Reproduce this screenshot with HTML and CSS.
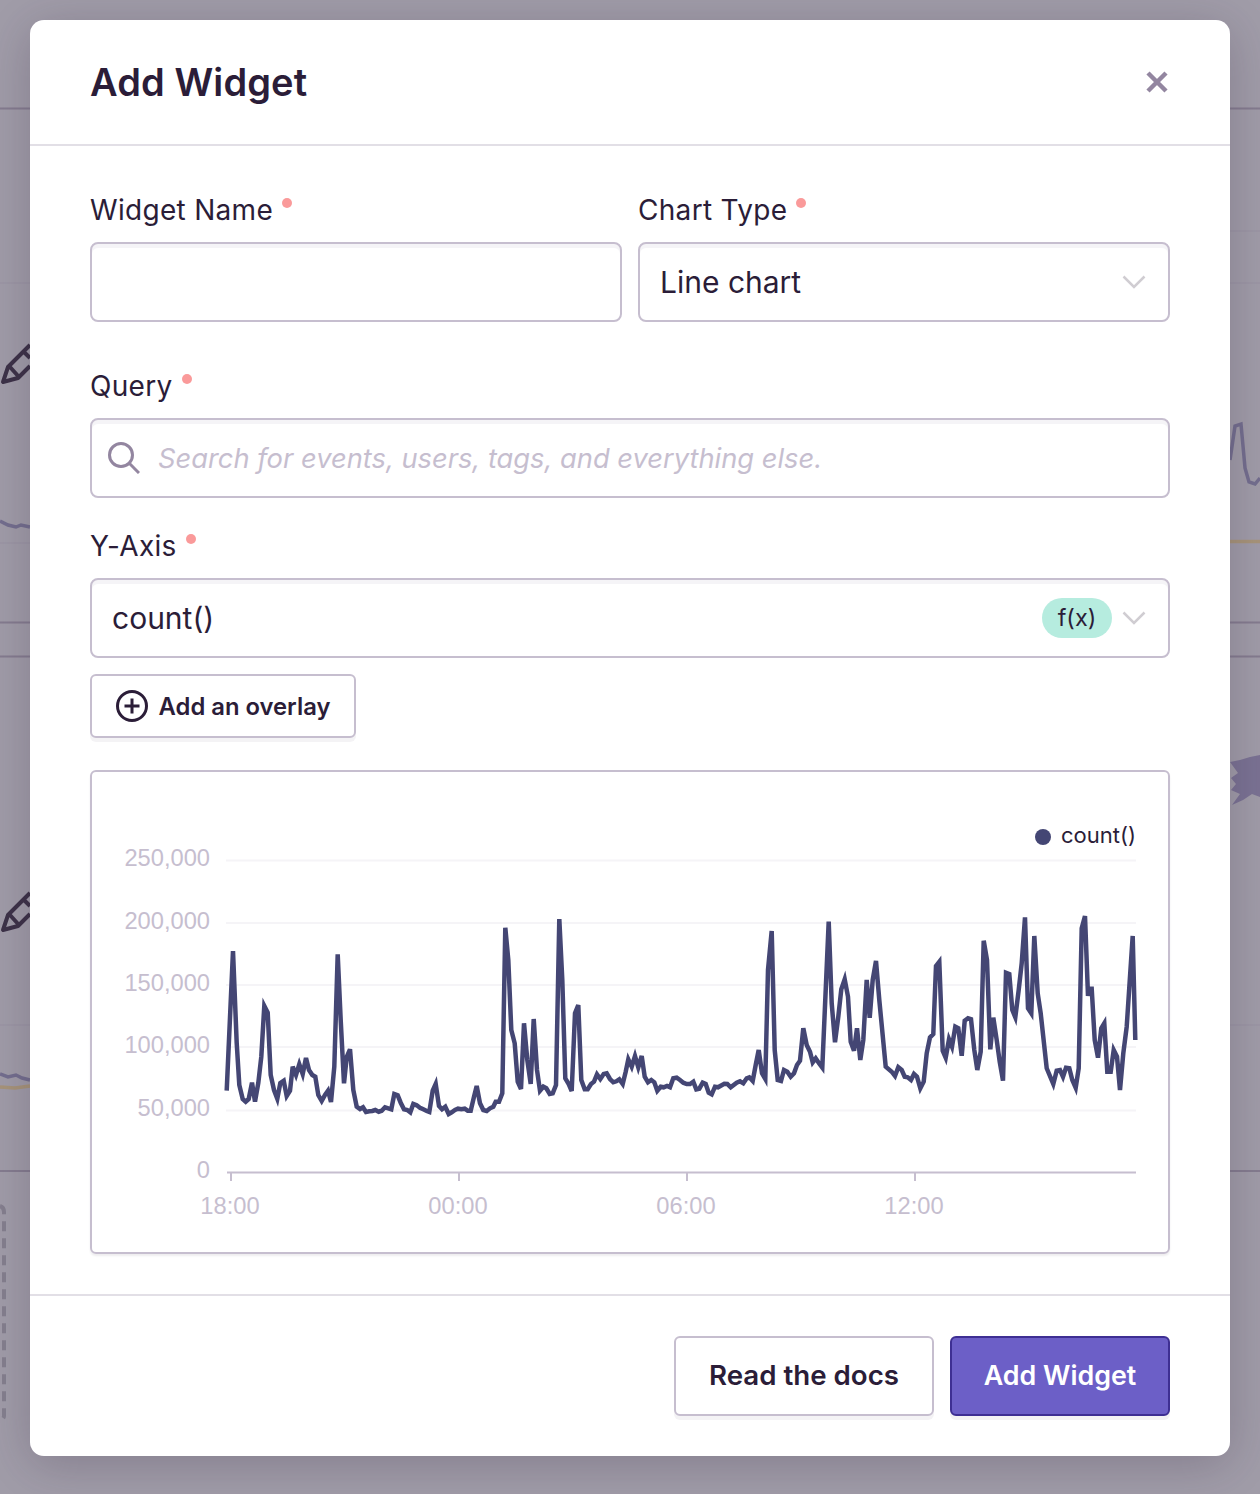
FILE: index.html
```html
<!DOCTYPE html>
<html lang="en">
<head>
    <meta charset="UTF-8">
    <meta name="viewport" content="width=device-width, initial-scale=1.0">
    <title>Add Widget</title>
    <link rel="stylesheet" href="styles.css">
</head>
<body>
    <!-- dashboard behind the modal -->
    <svg class="backdrop" viewBox="0 0 1260 1494" aria-hidden="true">
        <g class="bg-rule">
            <path d="M0 108.500H30M1230 108.500H1260"/>
            <path d="M0 622.500H30M1230 622.500H1260"/>
            <path d="M0 656.500H30M1230 656.500H1260"/>
            <path d="M0 1171H30M1230 1171H1260"/>
        </g>
        <g class="bg-soft">
            <path d="M0 543H30M0 283H30M1230 283H1260M1230 231H1260M0 1025H30M1230 1025H1260"/>
        </g>
        <g class="bg-pen">
            <path d="M30 345L8 367L3 382L18 378L30 366M10 367L19 377M24 352L30 358"/>
            <path d="M30 893L8 915L3 930L18 926L30 914M10 915L19 925M24 900L30 906"/>
        </g>
        <path class="bg-series" d="M0 521L8 525L16 527L21 525L30 527"/>
        <path class="bg-series" d="M1230 460L1235 426L1241 424L1245 468L1249 482L1255 484L1260 478"/>
        <path class="bg-series" d="M0 1074L8 1077L16 1075L22 1078L30 1080"/>
        <path class="bg-gold" d="M1230 541.500H1260"/>
        <path class="bg-gold" d="M0 1087L15 1088L30 1086"/>
        <path class="bg-dash" d="M0 1206C3 1207 4 1209 4 1212V1416C4 1418 2 1420 0 1421"/>
        <path class="bg-blob" d="M1230 762L1240 760L1250 757L1260 755V797L1252 794L1243 800L1232 805L1240 794L1231 790L1236 784L1231 778L1238 773Z"/>
    </svg>

    <div class="modal">
        <header class="modal-header">
            <h1>Add Widget</h1>
            <svg class="close-icon" viewBox="0 0 22 22"><path d="M2 2L20 20M20 2L2 20"/></svg>
        </header>

        <div class="modal-body">
            <div class="row">
                <div class="field">
                    <label class="required">Widget Name</label>
                    <div class="input"></div>
                </div>
                <div class="field">
                    <label class="required">Chart Type</label>
                    <div class="input select">
                        <span>Line chart</span>
                        <svg class="chevron" viewBox="0 0 24 14"><path d="M1.500 1.500L12 12L22.500 1.500"/></svg>
                    </div>
                </div>
            </div>

            <div class="field query-field">
                <label class="required">Query</label>
                <div class="input search">
                    <svg class="search-icon" viewBox="0 0 32 32"><circle cx="13" cy="13" r="11.500"/><path d="M21.500 21.500L31 31"/></svg>
                    <span class="placeholder">Search for events, users, tags, and everything else.</span>
                </div>
            </div>

            <div class="field yaxis-field">
                <label class="required">Y-Axis</label>
                <div class="input select">
                    <span>count()</span>
                    <span class="pill">f(x)</span>
                    <svg class="chevron" viewBox="0 0 24 14"><path d="M1.500 1.500L12 12L22.500 1.500"/></svg>
                </div>
            </div>

            <button class="btn overlay-btn">
                <svg class="plus-icon" viewBox="0 0 32 32"><circle cx="16" cy="16" r="14.500"/><path d="M16 8.500V23.500M8.500 16H23.500"/></svg>
                Add an overlay
            </button>

            <div class="chart-panel">
                <svg class="chart" viewBox="92 772 1076 480">
                    <g class="grid">
                        <path d="M226 860.500H1136M226 923H1136M226 985H1136M226 1047H1136M226 1110.500H1136"/>
                    </g>
                    <g class="axis">
                        <path d="M227 1172.500H1136"/>
                        <path d="M231 1172V1181M459 1172V1181M687 1172V1181M915 1172V1181"/>
                    </g>
                    <g class="y-labels">
                        <text x="210" y="866">250,000</text>
                        <text x="210" y="929">200,000</text>
                        <text x="210" y="991">150,000</text>
                        <text x="210" y="1053">100,000</text>
                        <text x="210" y="1116">50,000</text>
                        <text x="210" y="1178">0</text>
                    </g>
                    <g class="x-labels">
                        <text x="230" y="1214">18:00</text>
                        <text x="458" y="1214">00:00</text>
                        <text x="686" y="1214">06:00</text>
                        <text x="914" y="1214">12:00</text>
                    </g>
                    <circle class="legend-dot" cx="1043" cy="837" r="8"/>
                    <text class="legend-label" x="1136" y="843">count()</text>
                    <polyline class="series" points="226.700,1090.700 233,951 236.700,1043 239.300,1085 242.700,1099 245.700,1101.700 248.700,1099 252,1082.700 255,1101.700 258.300,1083 261.300,1056.700 264.300,1006 267.700,1012.700 270.700,1075 274,1090 277.300,1098.700 280.300,1083 283.700,1080.700 286.700,1096 290,1090.700 292.700,1066.700 296,1075 299.300,1064.300 302.700,1074 306,1058 309,1070 312.300,1075 315.300,1076.700 318.300,1095 321.700,1101 325,1095 328,1090.700 331,1102 334.300,1066.700 337.700,954.300 340.700,1020 344,1083.300 346.700,1057 350,1049.300 353.300,1090 356.700,1106.700 360,1109 363,1107.300 366,1112 369.300,1111.300 372.300,1111 375.300,1110 378.700,1111.700 381.700,1110.700 385,1107.300 388.300,1108.300 391.300,1109.300 394.300,1094 397.700,1095.300 400.700,1102.700 404,1109.300 407.300,1110 410.300,1112.300 413.300,1104 416.700,1105.300 420,1107.700 423.300,1109.300 426.700,1111 429.300,1112 432.700,1090.700 435.700,1084 439,1106 442,1109.300 445.300,1106.700 448.700,1114 451.700,1112.300 455,1110 458,1108.700 461.300,1109.300 464.700,1108.700 467.700,1110.700 470.700,1110.700 474,1096.700 476.700,1086 480,1103.300 483.300,1110 486.700,1111 490,1108.300 493.300,1106.700 495.700,1101.700 499,1101.700 502.300,1093.300 505.300,927.700 508.300,960 511.300,1030 514.700,1043.300 517.700,1081.700 521,1089 524,1023.300 527.300,1060 530.700,1084 533.700,1019 537,1070 540,1090.700 543.300,1086.700 546.300,1088.300 549.700,1094 552.700,1093.300 556,1085 559.300,919 562.300,980 565.300,1078.300 568.700,1084 571.700,1091 575,1013.300 578.300,1005 581.300,1080 584.700,1089.300 587.700,1089.300 591,1084 594,1081.700 597,1074.300 600.300,1079 603.700,1074 606.700,1073.300 610,1079 613.300,1082.300 616.300,1081.300 619.300,1079.300 622.700,1084 625.700,1071.700 628.300,1059.300 631.700,1066.700 635,1056 638.300,1067.300 641.700,1056 644.700,1076.700 648,1082.300 651.300,1080 654.300,1082.300 657.300,1090.700 660.700,1086.700 663.700,1087.300 667,1086 670,1087.300 673.300,1078.300 676.700,1077.700 680,1080 683.300,1082.700 686.700,1084 690,1084 693.300,1081.700 696.300,1089.300 699.300,1088.700 702.700,1082.700 705.700,1084 708.700,1092.700 711.700,1094.300 715,1086.700 718,1087.300 724.300,1083.700 727.300,1084 730.700,1087.300 736.700,1082.700 740,1081.300 743.300,1083.300 746.700,1078.300 749.300,1077.300 752.700,1081 755.700,1065 758.700,1050 762,1073.300 765.300,1079 768,970 771.700,931 774.700,1050 777.700,1080 781,1081 784,1070 787.300,1071.700 790.700,1076.700 794,1073.300 797,1065 800,1060.700 803.300,1028.300 806.700,1045 810,1051.700 812.700,1062.300 815.700,1058.300 819,1063.300 822.300,1067.700 828.700,921.700 831.700,1003.300 835,1042.300 838.300,1016.700 841.300,989.300 844.700,979.300 848,996.700 850.700,1041.700 854,1050.700 857,1028.300 860.300,1060 863.300,1040 866.700,980 869.700,1017.700 872.700,980 876,961 879.300,1000 885.700,1066.700 891.700,1071.700 895,1076 898.300,1067.300 901.700,1070 904.700,1076.700 907.700,1077.300 911,1080 914,1074 917,1076.700 920.300,1088.300 923.700,1081.700 926.700,1053.300 930,1037.300 933.300,1034 936,966 939.300,961.700 942.700,1050.700 945.700,1057.700 949,1039.300 952,1046.700 955.300,1026.700 958.300,1028.300 961.700,1055.700 964.700,1020.700 968,1018.300 971,1019.300 974.300,1050 977.300,1070 980.700,1051.700 983.700,940.700 987,960 990.300,1049.300 993.300,1017.700 996.700,1040 999.700,1061.700 1003,1080.700 1006,972.700 1009.300,974 1012.300,1010 1015.300,1017.300 1018.700,990 1021.700,963.300 1025,917.300 1028,1008.300 1031.300,1013.300 1034.300,936 1037.700,993.300 1040.700,1013.300 1046.700,1068.300 1053.300,1084 1056.700,1070.700 1060,1070 1063,1076.700 1066,1067.700 1069.300,1068.300 1072.300,1080 1075.700,1087.700 1078.700,1068.300 1081.700,928.300 1085,916 1088,996 1089,988.700 1091.700,988.700 1094.700,1040 1098,1057.700 1101.300,1028.300 1104.300,1023.300 1107.300,1071.700 1110.700,1071.700 1113.700,1050 1117,1056.700 1120,1090 1123.300,1053.300 1126.700,1026.700 1132.700,936 1135.300,1040"/>
                </svg>
            </div>
        </div>

        <footer class="modal-footer">
            <button class="btn footer-btn">Read the docs</button>
            <button class="btn footer-btn primary">Add Widget</button>
        </footer>
    </div>
</body>
</html>
```

FILE: styles.css
```css
* {
    box-sizing: border-box;
}
html, body {
    margin: 0;
    height: 1494px;
    overflow: hidden;
}
body {
    position: relative;
    padding: 20px 30px 38px;
    background-color: #a19da9;
    font-family: Inter, "Noto Sans", sans-serif;
    color: #2b1d38;
}

/* backdrop */
.backdrop {
    position: absolute;
    left: 0;
    top: 0;
    width: 1260px;
    height: 1494px;
    fill: none;
}
.bg-rule path {
    stroke: #857d90;
    stroke-width: 2;
}
.bg-soft path {
    stroke: #9d98a6;
    stroke-width: 2;
}
.bg-pen path {
    stroke: #3d3248;
    stroke-width: 4;
    stroke-linejoin: round;
}
.bg-series {
    stroke: #746f8f;
    stroke-width: 3.500;
}
.bg-gold {
    stroke: #a8957a;
    stroke-width: 3.500;
}
.bg-dash {
    stroke: #85808f;
    stroke-width: 4;
    stroke-dasharray: 10 7;
}
.bg-blob {
    fill: #7b7394;
}

/* modal */
.modal {
    position: relative;
    width: 1200px;
    height: 1436px;
    background: white;
    border-radius: 14px;
    box-shadow: 0 8px 50px rgba(43, 29, 56, 0.25);
}
.modal-header {
    height: 126px;
    padding: 0 60px;
    display: flex;
    align-items: center;
    justify-content: space-between;
    border-bottom: 2px solid #e2dfe6;
}
.modal-header h1 {
    margin: 0;
    font-size: 38px;
    font-weight: 600;
    letter-spacing: 0.1px;
}
.close-icon {
    width: 22px;
    height: 22px;
    margin-right: 2px;
    fill: none;
    stroke: #9386a0;
    stroke-width: 4.500;
}
.modal-body {
    padding: 0 60px;
}
.row {
    display: flex;
    gap: 16px;
    padding-top: 42px;
}
.field {
    flex: 1;
}
.field label {
    display: block;
    height: 44px;
    margin-bottom: 10px;
    font-size: 28px;
    line-height: 44px;
    letter-spacing: 0.3px;
}
.required::after {
    content: "";
    display: inline-block;
    width: 10px;
    height: 10px;
    margin-left: 9px;
    border-radius: 50%;
    background-color: #fa9a9a;
    vertical-align: 12px;
}
.query-field {
    margin-top: 42px;
}
.yaxis-field {
    margin-top: 26px;
}
.input {
    height: 80px;
    padding: 0 20px;
    display: flex;
    align-items: center;
    border: 2px solid #c6becf;
    border-radius: 8px;
    box-shadow: inset 0 4px 0 #f5f4f7;
    font-size: 30px;
}
.select span:first-child {
    flex: 1;
}
.chevron {
    width: 24px;
    height: 14px;
    margin: 0 2px 0 10px;
    fill: none;
    stroke: #d0cdd2;
    stroke-width: 2.500;
}
.pill {
    width: 70px;
    height: 40px;
    border-radius: 20px;
    background-color: #b6ecdf;
    font-size: 23.500px;
    line-height: 40px;
    text-align: center;
}
.search {
    padding-left: 16px;
}
.search-icon {
    width: 32px;
    height: 32px;
    margin-right: 18px;
    fill: none;
    stroke: #9386a0;
    stroke-width: 3;
}
.placeholder {
    color: #c6becf;
    font-size: 27.300px;
    font-style: italic;
}

/* buttons */
.btn {
    display: flex;
    align-items: center;
    justify-content: center;
    padding: 0;
    background: white;
    color: #2b1d38;
    border: 2px solid #c6becf;
    border-radius: 6px;
    box-shadow: 0 4px 0 rgba(43, 29, 56, 0.05);
    font-family: inherit;
    font-weight: 600;
}
.overlay-btn {
    width: 266px;
    height: 64px;
    margin-top: 16px;
    font-size: 23.800px;
    gap: 11px;
}
.plus-icon {
    width: 32px;
    height: 32px;
    fill: none;
    stroke: #2b1d38;
    stroke-width: 3;
}
.footer-btn {
    width: 260px;
    height: 80px;
    padding-bottom: 2px;
    font-size: 27.700px;
}
.primary {
    width: 220px;
    background-color: #6c5fc7;
    border-color: #3e2f93;
    color: white;
    font-size: 26.800px;
}

/* chart */
.chart-panel {
    height: 484px;
    margin-top: 32px;
    border: 2px solid #c6becf;
    border-radius: 6px;
    box-shadow: 0 2px 2px rgba(43, 29, 56, 0.08);
}
.chart {
    display: block;
    width: 1076px;
    height: 480px;
    fill: none;
}
.grid path {
    stroke: #f5f4f7;
    stroke-width: 2;
}
.axis path {
    stroke: #c6becf;
    stroke-width: 2;
}
.y-labels text, .x-labels text {
    fill: #c6becf;
    font-family: "Liberation Sans", Arial, sans-serif;
    font-size: 23.700px;
}
.y-labels text {
    text-anchor: end;
}
.x-labels text {
    text-anchor: middle;
}
.legend-dot {
    fill: #444674;
}
.legend-label {
    fill: #2b1d38;
    font-size: 22px;
    text-anchor: end;
}
.series {
    stroke: #444674;
    stroke-width: 4.500;
    stroke-linejoin: miter;
}

/* footer */
.modal-footer {
    height: 162px;
    margin-top: 40px;
    padding-top: 40px;
    display: flex;
    justify-content: flex-end;
    align-items: flex-start;
    gap: 16px;
    padding-right: 60px;
    border-top: 2px solid #e2dfe6;
}
```
